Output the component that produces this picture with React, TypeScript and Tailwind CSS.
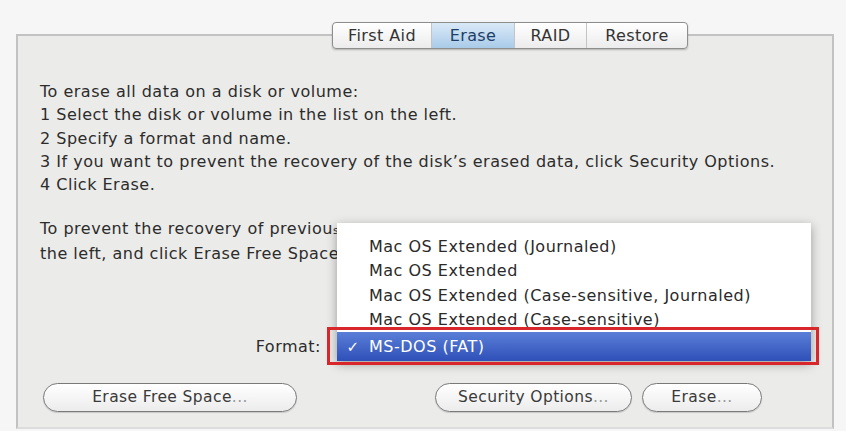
import React from 'react';

const font = { fontFamily: '"DejaVu Sans", "Liberation Sans", sans-serif' };

const tabs = ['First Aid', 'Erase', 'RAID', 'Restore'];

const formats = [
  'Mac OS Extended (Journaled)',
  'Mac OS Extended',
  'Mac OS Extended (Case-sensitive, Journaled)',
  'Mac OS Extended (Case-sensitive)',
];

function PillButton({ label, width }: { label: string; width: string }) {
  return (
    <button
      className={`${width} h-[29px] rounded-full border-[1.5px] border-[#7a7a7a] bg-gradient-to-b from-[#ffffff] to-[#ececec] shadow-[0_1px_1px_rgba(0,0,0,0.15)] text-[15.5px] tracking-[0.4px] text-[#3a3a3a]`}
    >
      {label}
      <span className="text-[#9a9a9a]">...</span>
    </button>
  );
}

export default function App() {
  return (
    <div className="w-[846px] h-[431px] bg-[#f6f6f6] overflow-hidden pt-[22px]" style={font}>
      {/* tab bar */}
      <div className="relative z-10 ml-[332px] flex w-[356px] h-[27px] rounded-[4px] border border-[#8e8e8e] bg-gradient-to-b from-[#ffffff] to-[#ececec] shadow-[0_1px_2px_rgba(0,0,0,0.25)] overflow-hidden text-[16px] tracking-[0.4px] text-[#333]">
        {tabs.map((t, i) => (
          <div
            key={t}
            className={`flex items-center justify-center ${
              i === 0 ? 'w-[98px]' : i === 1 ? 'w-[83px]' : i === 2 ? 'w-[72px]' : 'flex-1'
            } ${i > 0 ? 'border-l border-[#c4c4c4]' : ''} ${
              t === 'Erase' ? 'bg-gradient-to-b from-[#d9e9f7] to-[#a9cbe9] text-[#1d3e66]' : ''
            }`}
          >
            {t}
          </div>
        ))}
      </div>

      {/* panel */}
      <div className="-mt-[15px] ml-[16px] w-[818px] h-[395px] border-2 border-[#c2c2c2] border-b-[#dcdcdc] bg-[#ebebe9] flex flex-col pt-[44px] pl-[22px] text-[16px] tracking-[0.5px] text-[#2c2c2c]">
        <div className="leading-[23.3px] whitespace-nowrap">
          <p>To erase all data on a disk or volume:</p>
          <p>1 Select the disk or volume in the list on the left.</p>
          <p>2 Specify a format and name.</p>
          <p>3 If you want to prevent the recovery of the disk’s erased data, click Security Options.</p>
          <p>4 Click Erase.</p>
        </div>
        <div className="mt-[21px] leading-[23px] whitespace-nowrap">
          <p>
            To prevent the recovery of previou
            <span className="text-[11px] tracking-[-0.3px]">sly deleted files without erasing the volume, select a volume in the list on</span>
          </p>
          <p>the left, and click Erase Free Space.</p>
        </div>

        {/* format row */}
        <div className="mt-[67px] flex items-center h-[29px]">
          <span className="w-[297px] text-right pr-[16px]">Format:</span>
          <div className="relative w-[474px] h-[29px]">
            <div className="absolute left-0 bottom-0 w-full bg-white pt-[11px] shadow-[0_3px_10px_rgba(0,0,0,0.35)] text-[#2a2a2a]">
              {formats.map((f) => (
                <div key={f} className="h-[24.5px] flex items-center pl-[32px] whitespace-nowrap">
                  {f}
                </div>
              ))}
              <div className="relative h-[29px] flex items-center bg-gradient-to-b from-[#5b7fd8] to-[#2f4fb8] text-white">
                <span className="w-[32px] text-center text-[15px]">✓</span>
                <span>MS-DOS (FAT)</span>
                <div className="absolute -left-[10px] -right-[8px] -top-[5px] -bottom-[4px] border-[3px] border-[#d9262b]" />
              </div>
            </div>
          </div>
        </div>

        {/* buttons */}
        <div className="mt-[22px] pl-[3px] flex items-center">
          <PillButton label="Erase Free Space" width="w-[254px]" />
          <div className="ml-[138px] flex gap-[10px]">
            <PillButton label="Security Options" width="w-[197px]" />
            <PillButton label="Erase" width="w-[120px]" />
          </div>
        </div>
      </div>
    </div>
  );
}
